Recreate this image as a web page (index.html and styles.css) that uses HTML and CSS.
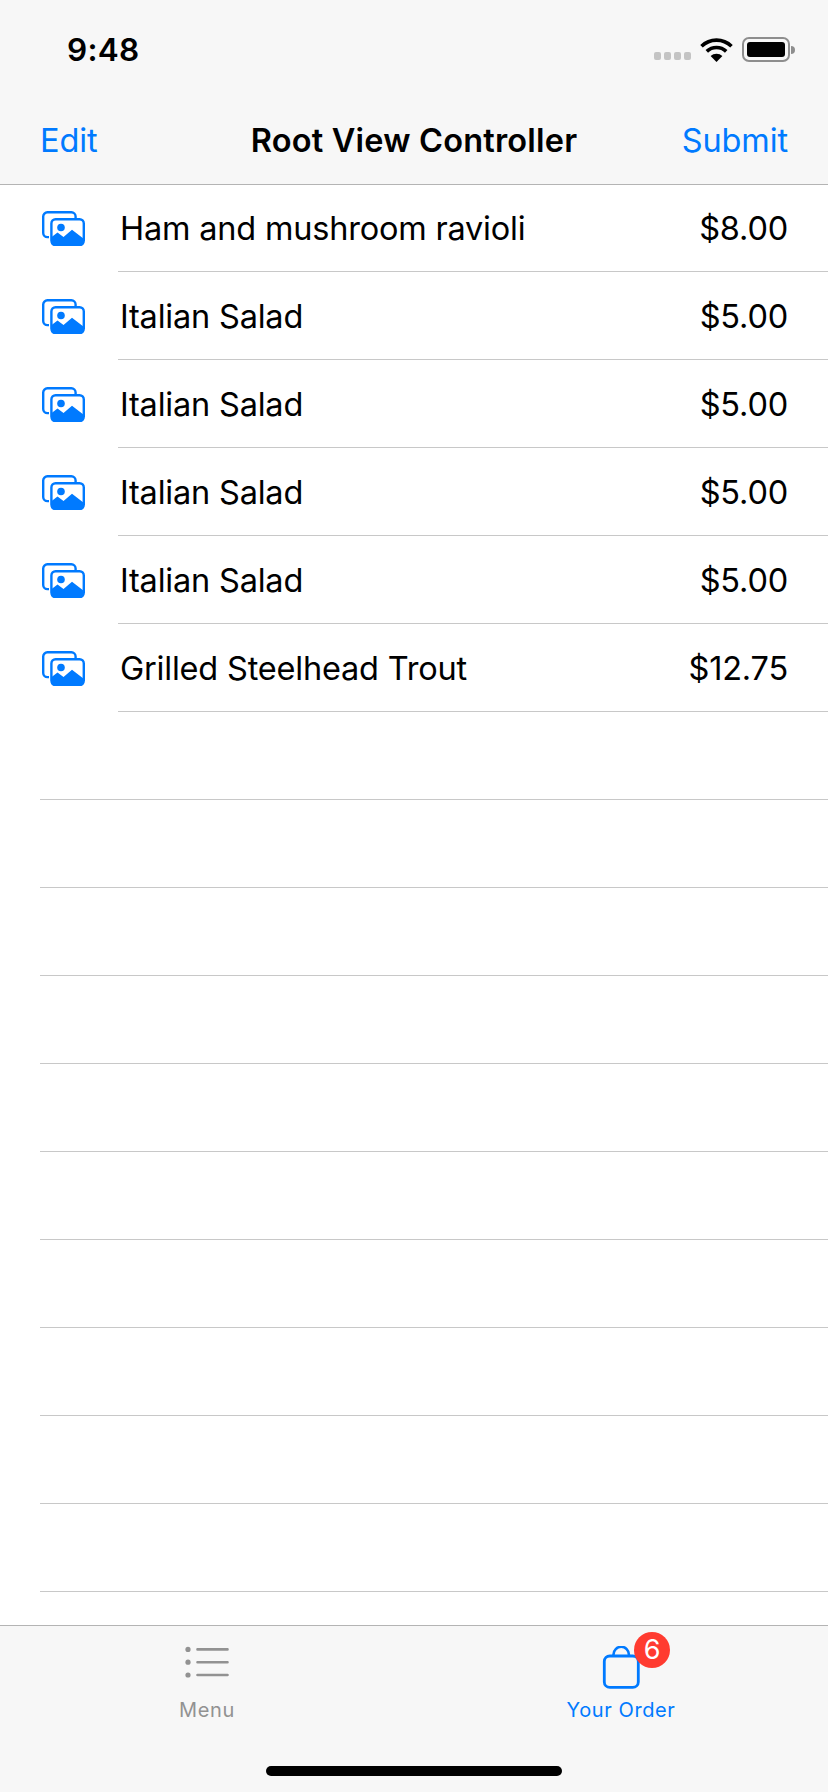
FILE: index.html
```html
<!DOCTYPE html>
<html lang="en">
<head>
    <meta charset="UTF-8">
    <meta name="viewport" content="width=device-width, initial-scale=1.0">
    <title>Root View Controller</title>
    <link rel="stylesheet" href="styles.css">
</head>
<body>
    <svg class="defs" width="0" height="0">
        <symbol id="photos" viewBox="0 0 43 35">
            <path d="M33.6 7V5.5a4.2 4.2 0 0 0-4.2-4.2H5.4a4.2 4.2 0 0 0-4.2 4.2v16.4a4.2 4.2 0 0 0 4.2 4.2H7" fill="none" stroke="#007aff" stroke-width="2.4"/>
            <rect x="9.4" y="8.2" width="32.4" height="25.6" rx="4.2" fill="none" stroke="#007aff" stroke-width="2.4"/>
            <path d="M9 26.5 15.5 21.5 21.5 26 30 18.8 42 28V31a4 4 0 0 1-4 4H13a4 4 0 0 1-4-4Z" fill="#007aff"/>
            <circle cx="19" cy="16.5" r="3.8" fill="#007aff"/>
        </symbol>
    </svg>

    <div class="top">
        <div class="status">
            <span class="time">9:48</span>
            <div class="status-icons">
                <div class="signal"><i></i><i></i><i></i><i></i></div>
                <svg class="wifi" width="33" height="24" viewBox="0 0 33 24">
                    <path d="M1.5 8.2a21.5 21.5 0 0 1 30 0" fill="none" stroke="#000" stroke-width="3.6"/>
                    <path d="M6.8 13.4a14 14 0 0 1 19.4 0" fill="none" stroke="#000" stroke-width="3.6"/>
                    <path d="M16.5 24 10.6 18a8.6 8.6 0 0 1 11.8 0Z" fill="#000"/>
                </svg>
                <div class="battery"><div class="battery-level"></div></div>
                <div class="battery-tip"></div>
            </div>
        </div>
        <div class="nav">
            <span class="nav-btn">Edit</span>
            <span class="nav-title">Root View Controller</span>
            <span class="nav-btn nav-right">Submit</span>
        </div>
    </div>

    <div class="list">
        <div class="row">
            <svg class="row-icon"><use href="#photos"/></svg>
            <div class="row-body"><span>Ham and mushroom ravioli</span><span>$8.00</span></div>
        </div>
        <div class="row">
            <svg class="row-icon"><use href="#photos"/></svg>
            <div class="row-body"><span>Italian Salad</span><span>$5.00</span></div>
        </div>
        <div class="row">
            <svg class="row-icon"><use href="#photos"/></svg>
            <div class="row-body"><span>Italian Salad</span><span>$5.00</span></div>
        </div>
        <div class="row">
            <svg class="row-icon"><use href="#photos"/></svg>
            <div class="row-body"><span>Italian Salad</span><span>$5.00</span></div>
        </div>
        <div class="row">
            <svg class="row-icon"><use href="#photos"/></svg>
            <div class="row-body"><span>Italian Salad</span><span>$5.00</span></div>
        </div>
        <div class="row">
            <svg class="row-icon"><use href="#photos"/></svg>
            <div class="row-body"><span>Grilled Steelhead Trout</span><span>$12.75</span></div>
        </div>
        <div class="empty"></div>
        <div class="empty"></div>
        <div class="empty"></div>
        <div class="empty"></div>
        <div class="empty"></div>
        <div class="empty"></div>
        <div class="empty"></div>
        <div class="empty"></div>
        <div class="empty"></div>
        <div class="empty"></div>
    </div>

    <div class="tabbar">
        <div class="tabs">
            <div class="tab">
                <svg class="tab-icon" width="44" height="43" viewBox="0 0 44 43">
                    <circle cx="3" cy="3.4" r="2.6" fill="#929292"/>
                    <circle cx="3" cy="16.2" r="2.6" fill="#929292"/>
                    <circle cx="3" cy="29" r="2.6" fill="#929292"/>
                    <path d="M12.5 3.4H42.5M12.5 16.2H42.5M12.5 29H42.5" stroke="#929292" stroke-width="2.6" stroke-linecap="round"/>
                </svg>
                <span class="tab-label">Menu</span>
            </div>
            <div class="tab tab-active">
                <div class="bag-wrap">
                    <svg class="tab-icon" width="38" height="43" viewBox="0 0 38 43">
                        <path d="M11.5 10V8.5a7.7 7.7 0 0 1 15.4 0V10" fill="none" stroke="#007aff" stroke-width="2.6"/>
                        <rect x="2.3" y="10" width="34" height="31.4" rx="5.5" fill="none" stroke="#007aff" stroke-width="2.8"/>
                    </svg>
                    <span class="badge">6</span>
                </div>
                <span class="tab-label">Your Order</span>
            </div>
        </div>
        <div class="home"></div>
    </div>
</body>
</html>
```

FILE: styles.css
```css
* {
    box-sizing: border-box;
}
html, body {
    margin: 0;
    height: 100%;
}
body {
    display: flex;
    flex-direction: column;
    height: 1792px;
    overflow: hidden;
    background: white;
    color: black;
    font-family: Inter, "Liberation Sans", sans-serif;
}
.defs {
    display: none;
}

.top {
    height: 185px;
    flex: none;
    background: #f7f7f7;
    border-bottom: 1px solid #b4b4b4;
}
.status {
    height: 88px;
    display: flex;
    justify-content: space-between;
    align-items: center;
    padding: 11px 33px 0 67px;
}
.time {
    font-size: 31.5px;
    font-weight: 600;
    letter-spacing: 0.3px;
}
.status-icons {
    display: flex;
    align-items: center;
}
.signal {
    display: flex;
    gap: 2.6px;
    margin: 13px 9px 0 0;
}
.signal i {
    width: 7.4px;
    height: 7.4px;
    border-radius: 2px;
    background: #c4c4c4;
}
.wifi {
    margin-right: 9px;
}
.battery {
    width: 48px;
    height: 25px;
    padding: 3px;
    border: 2px solid #8e8e8e;
    border-radius: 7px;
}
.battery-level {
    height: 100%;
    background: black;
    border-radius: 3px;
}
.battery-tip {
    width: 4px;
    height: 8px;
    margin-left: 1px;
    background: #8e8e8e;
    border-radius: 0 4px 4px 0;
}

.nav {
    height: 96px;
    display: grid;
    grid-template-columns: 1fr auto 1fr;
    align-items: center;
    padding: 8px 40px 0 40px;
}
.nav-btn {
    color: #007aff;
    font-size: 32.5px;
    letter-spacing: -0.1px;
}
.nav-right {
    text-align: right;
}
.nav-title {
    font-size: 32.5px;
    font-weight: 600;
    letter-spacing: 0.2px;
}

.list {
    flex: 1;
    margin-top: -1px;
    overflow: hidden;
}
.row {
    height: 88px;
    display: flex;
    align-items: center;
    padding-left: 42px;
}
.row-icon {
    width: 43px;
    height: 35px;
    flex: none;
    margin-right: 33px;
}
.row-body {
    flex: 1;
    align-self: stretch;
    display: flex;
    justify-content: space-between;
    align-items: center;
    padding: 1px 40px 0 2px;
    border-bottom: 1px solid #c8c8c8;
    font-size: 32.5px;
    letter-spacing: -0.2px;
}
.empty {
    height: 88px;
    margin-left: 40px;
    border-bottom: 1px solid #c8c8c8;
}

.tabbar {
    height: 167px;
    flex: none;
    display: flex;
    flex-direction: column;
    background: #f7f7f7;
    border-top: 1px solid #b4b4b4;
}
.tabs {
    display: flex;
    height: 140px;
}
.tab {
    flex: 1;
    display: flex;
    flex-direction: column;
    align-items: center;
    padding-top: 20px;
    color: #929292;
}
.tab-active {
    color: #007aff;
}
.tab-icon {
    display: block;
}
.tab-label {
    margin-top: 9px;
    font-size: 20px;
    letter-spacing: 0.6px;
}
.bag-wrap {
    position: relative;
}
.badge {
    position: absolute;
    top: -14px;
    left: 32px;
    width: 36px;
    height: 36px;
    border-radius: 50%;
    background: #ff3b30;
    color: white;
    font-size: 27px;
    line-height: 36px;
    text-align: center;
}
.home {
    width: 296px;
    height: 10px;
    margin: 0 auto;
    background: black;
    border-radius: 5px;
}
```
